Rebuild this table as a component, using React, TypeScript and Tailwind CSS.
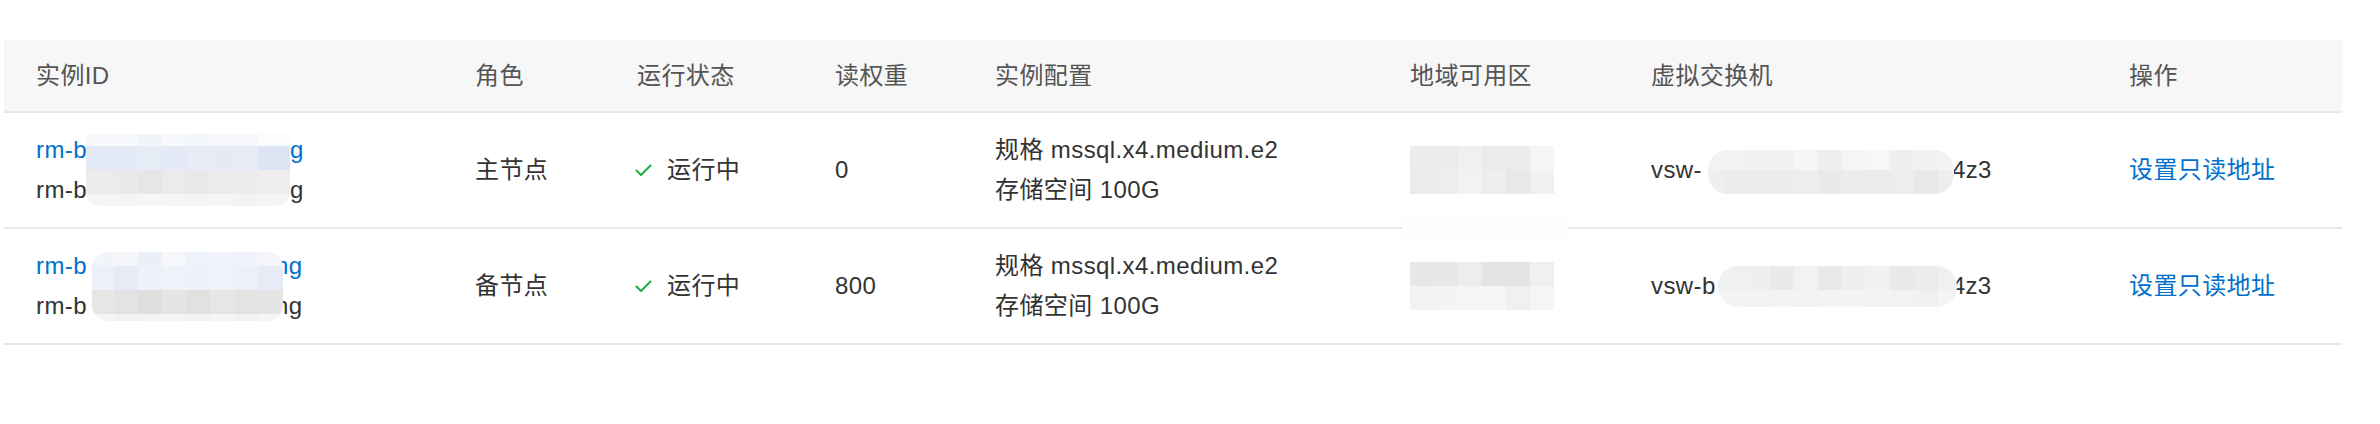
import React from "react";

type Tiles = { cols: number[]; rows: number[]; colors: string[][] };

// privacy mosaics that sit over the masked ids in the reference
const idMaskA: Tiles = {
  cols: [28, 24, 24, 24, 24, 24, 24, 32],
  rows: [12, 24, 24, 12],
  colors: [
    ["#f7f8fb", "#f7f8fb", "#f1f4f9", "#f7f8fb", "#f3f6fa", "#f5f7fb", "#f7f8fb", "#fbfcfd"],
    ["#e4eaf5", "#e4eaf5", "#e6ecf6", "#e4eaf5", "#e7ecf6", "#e5ebf5", "#e6ebf5", "#dde4f3"],
    ["#ececec", "#eaeaea", "#e6e6e6", "#ebebeb", "#e9e9e9", "#ebebeb", "#ececec", "#eeeeee"],
    ["#f5f5f5", "#f4f4f4", "#f6f6f6", "#f5f5f5", "#f4f4f4", "#f6f6f6", "#f3f3f3", "#f5f5f5"],
  ],
};

const idMaskB: Tiles = {
  cols: [22, 24, 24, 24, 24, 24, 24, 25],
  rows: [14, 24, 24, 7],
  colors: [
    ["#f1f4fa", "#f4f6fa", "#eaeff8", "#f5f7fb", "#eef2f9", "#f1f4fa", "#f0f3f9", "#f3f5fa"],
    ["#ecf1f9", "#e6ecf6", "#edf1f9", "#eef2f9", "#edf1f9", "#eef2f9", "#ecf0f8", "#e6ecf6"],
    ["#e6e6e6", "#e3e3e3", "#dedede", "#e5e5e5", "#e1e1e1", "#e6e6e6", "#e3e3e3", "#e5e5e5"],
    ["#f5f5f5", "#f2f2f2", "#f4f4f4", "#f5f5f5", "#f3f3f3", "#f5f5f5", "#f2f2f2", "#f5f5f5"],
  ],
};

const zoneMaskA: Tiles = {
  cols: [24, 24, 24, 24, 24, 24],
  rows: [24, 24],
  colors: [
    ["#ececec", "#ececec", "#f0f0f0", "#ebebeb", "#ebebeb", "#f5f5f5"],
    ["#ebebeb", "#ededed", "#f2f2f2", "#eeeeee", "#e8e8e8", "#f1f1f1"],
  ],
};

const zoneMaskB: Tiles = {
  cols: [24, 24, 24, 24, 24, 24],
  rows: [24, 24],
  colors: [
    ["#e7e7e7", "#e7e7e7", "#ededed", "#e4e4e4", "#e4e4e4", "#f0f0f0"],
    ["#f3f3f3", "#f4f4f4", "#f5f5f5", "#f5f5f5", "#f0f0f0", "#f5f5f5"],
  ],
};

const vswMaskA: Tiles = {
  cols: [14, 24, 24, 24, 24, 24, 24, 24, 24, 24, 16],
  rows: [20, 24],
  colors: [
    ["#f3f3f3", "#f2f2f2", "#f1f1f1", "#f1f1f1", "#f6f6f6", "#eeeeee", "#f5f5f5", "#f7f7f7", "#efefef", "#f1f1f1", "#f3f3f3"],
    ["#efefef", "#ececec", "#ececec", "#ececec", "#ededed", "#eaeaea", "#ececec", "#ebebeb", "#ededed", "#e8e8e8", "#eeeeee"],
  ],
};

const vswMaskB: Tiles = {
  cols: [4, 24, 24, 24, 24, 24, 24, 24, 24, 24, 19],
  rows: [24, 17],
  colors: [
    ["#efefef", "#f0f0f0", "#efefef", "#eaeaea", "#f2f2f2", "#e8e8e8", "#efefef", "#f1f1f1", "#e9e9e9", "#ececec", "#f0f0f0"],
    ["#f4f4f4", "#f4f4f4", "#f3f3f3", "#f4f4f4", "#f3f3f3", "#f4f4f4", "#f4f4f4", "#f3f3f3", "#f2f2f2", "#f0f0f0", "#f4f4f4"],
  ],
};

function Mosaic({ tiles, className }: { tiles: Tiles; className: string }) {
  return (
    <div className={"absolute flex flex-col overflow-hidden " + className}>
      {tiles.rows.map((h, r) => (
        <div key={r} className="flex shrink-0" style={{ height: h }}>
          {tiles.cols.map((w, c) => (
            <div key={c} className="shrink-0" style={{ width: w, backgroundColor: tiles.colors[r][c] }} />
          ))}
        </div>
      ))}
    </div>
  );
}

function Check() {
  return (
    <svg width="17" height="13" viewBox="0 0 17 13" fill="none" className="shrink-0">
      <path d="M1.5 6.5 L6 11 L15.5 1.5" stroke="#1fae45" strokeWidth="2" strokeLinecap="round" strokeLinejoin="round" />
    </svg>
  );
}

const cols = "grid grid-cols-[439px_162px_198px_160px_415px_241px_478px_245px]";
const headers = ["实例ID", "角色", "运行状态", "读权重", "实例配置", "地域可用区", "虚拟交换机", "操作"];

const rows = [
  {
    idGap: 203,
    idTail: "g",
    mask: idMaskA,
    maskPos: "left-[82px] top-[21px] rounded-b-[14px] rounded-t-[4px]",
    role: "主节点",
    weight: "0",
    zone: zoneMaskA,
    vswHead: "vsw-",
    vswGap: 250,
    vswMask: vswMaskA,
    vswPos: "left-[89px] top-[37px] rounded-[20px]",
  },
  {
    idGap: 188,
    idTail: "ng",
    mask: idMaskB,
    maskPos: "left-[88px] top-[23px] rounded-[16px]",
    role: "备节点",
    weight: "800",
    zone: zoneMaskB,
    vswHead: "vsw-b",
    vswGap: 236,
    vswMask: vswMaskB,
    vswPos: "left-[99px] top-[37px] rounded-[20px]",
  },
];

export default function App() {
  return (
    <div className="w-[2380px] h-[424px] bg-white pt-[40px] pl-[4px] font-['Liberation_Sans','Noto_Sans_CJK_SC',sans-serif] text-[24px] leading-[40px] tracking-[0.4px] text-[#333]">
      <div className="w-[2338px]">
        <div className={cols + " h-[73px] bg-[#f7f7f7] border-b-2 border-[#e8e8e8] text-[#555]"}>
          {headers.map((h) => (
            <div key={h} className="flex items-center pl-[32px]">
              {h}
            </div>
          ))}
        </div>

        {rows.map((r, i) => (
          <div key={i} className={cols + " h-[116px] border-b-2 border-[#e8e8e8]"}>
            <div className="relative flex flex-col justify-center pl-[32px]">
              <div className="text-[#0070cc] whitespace-nowrap">
                rm-b<span className="inline-block" style={{ width: r.idGap }} />
                {r.idTail}
              </div>
              <div className="whitespace-nowrap">
                rm-b<span className="inline-block" style={{ width: r.idGap }} />
                {r.idTail}
              </div>
              <Mosaic tiles={r.mask} className={r.maskPos} />
            </div>
            <div className="flex items-center pl-[32px]">{r.role}</div>
            <div className="flex items-center gap-[15px] pl-[30px]">
              <Check />
              <span>运行中</span>
            </div>
            <div className="flex items-center pl-[32px]">{r.weight}</div>
            <div className="flex flex-col justify-center pl-[32px] whitespace-nowrap">
              <div>规格 mssql.x4.medium.e2</div>
              <div>存储空间 100G</div>
            </div>
            <div className="relative">
              <Mosaic tiles={r.zone} className="left-[32px] top-[33px]" />
              {i === 0 && <div className="absolute left-[24px] top-[105px] w-[166px] h-[24px] bg-[#fdfdfd]" />}
            </div>
            <div className="relative flex items-center pl-[32px] whitespace-nowrap">
              {r.vswHead}
              <span className="inline-block" style={{ width: r.vswGap }} />
              4z3
              <Mosaic tiles={r.vswMask} className={r.vswPos} />
            </div>
            <div className="flex items-center pl-[32px] text-[#0070cc]">设置只读地址</div>
          </div>
        ))}
      </div>
    </div>
  );
}
